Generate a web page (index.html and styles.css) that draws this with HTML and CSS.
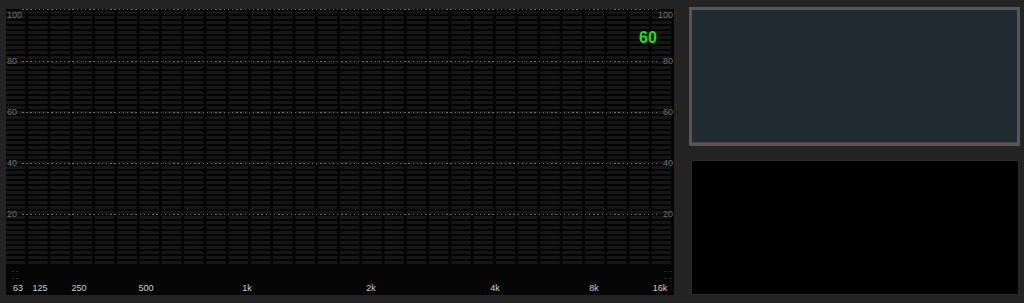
FILE: index.html
```html
<!DOCTYPE html>
<html lang="en">
<head>
  <meta charset="UTF-8">
  <title>Spectrum</title>
  <link rel="stylesheet" href="styles.css">
</head>
<body>

<div class="analyzer">
  <div class="bars"></div>

  <div class="grid g100"></div>
  <div class="grid g80"></div>
  <div class="grid g60"></div>
  <div class="grid g40"></div>
  <div class="grid g20"></div>

  <span class="db left t100">100</span>
  <span class="db right t100">100</span>
  <span class="db left t80">80</span>
  <span class="db right t80">80</span>
  <span class="db left t60">60</span>
  <span class="db right t60">60</span>
  <span class="db left t40">40</span>
  <span class="db right t40">40</span>
  <span class="db left t20">20</span>
  <span class="db right t20">20</span>

  <span class="zero zl"></span>
  <span class="zero zr"></span>

  <span class="peak">60</span>

  <span class="hz f63">63</span>
  <span class="hz f125">125</span>
  <span class="hz f250">250</span>
  <span class="hz f500">500</span>
  <span class="hz f1k">1k</span>
  <span class="hz f2k">2k</span>
  <span class="hz f4k">4k</span>
  <span class="hz f8k">8k</span>
  <span class="hz f16k">16k</span>
</div>

<div class="side">
  <div class="display"></div>
  <div class="scope"></div>
</div>

</body>
</html>
```

FILE: styles.css
```css
body {
  margin: 0;
  height: 303px;
  display: flex;
  align-items: flex-start;
  background-color: #232323;
  font-family: "Liberation Sans", Arial, sans-serif;
  overflow: hidden;
}

.analyzer {
  position: relative;
  width: 668px;
  height: 286px;
  margin: 9px 0 0 6px;
  background-color: #050505;
}

.bars {
  position: absolute;
  top: 2px;
  left: 0;
  right: 0;
  height: 255px;
  background-image:
    linear-gradient(to right, transparent 19.8px, #050505 19.8px),
    linear-gradient(to bottom, #161616 3px, transparent 3px);
  background-size: 22.267px 5px;
}

.grid {
  position: absolute;
  left: 16px;
  right: 17px;
  height: 1px;
  background-image: repeating-linear-gradient(to right, #6e6e6e 0 1.5px, transparent 1.5px 4.2px);
}

.g100 { top: 0; }
.g80 { top: 52px; }
.g60 { top: 103px; }
.g40 { top: 154px; }
.g20 { top: 205px; }

.db {
  position: absolute;
  font-size: 9px;
  line-height: 10px;
  color: #6e6e6e;
}

.db.left { left: 1px; }
.db.right { right: 1px; }

.t100 { top: 1px; }
.t80 { top: 47px; }
.t60 { top: 98px; }
.t40 { top: 149px; }
.t20 { top: 200px; }

.zero {
  position: absolute;
  width: 8px;
  height: 8px;
  top: 262px;
  border-top: 1px dashed #242424;
  border-bottom: 1px dashed #242424;
  box-sizing: border-box;
}

.zl { left: 5px; }
.zr { right: 2px; }

.peak {
  position: absolute;
  top: 20px;
  left: 633px;
  font-size: 16px;
  font-weight: bold;
  color: #22dd22;
}

.hz {
  position: absolute;
  top: 274px;
  font-size: 9px;
  line-height: 10px;
  color: #cfcfcf;
  transform: translateX(-50%);
}

.f63 { left: 12px; }
.f125 { left: 34px; }
.f250 { left: 73px; }
.f500 { left: 140px; }
.f1k { left: 241px; }
.f2k { left: 365px; }
.f4k { left: 489px; }
.f8k { left: 588px; }
.f16k { left: 654px; }

.side {
  display: flex;
  flex-direction: column;
  width: 331px;
  margin: 7px 0 0 15px;
}

.display {
  height: 139px;
  box-sizing: border-box;
  border: 3px solid #565656;
  background-color: #212b33;
  box-shadow: inset 0 -1px #5e3a3c;
}

.scope {
  height: 135px;
  margin: 14px 1px 0 2px;
  box-sizing: border-box;
  border: 1px solid #2c2c2c;
  background-color: #000;
}
```
